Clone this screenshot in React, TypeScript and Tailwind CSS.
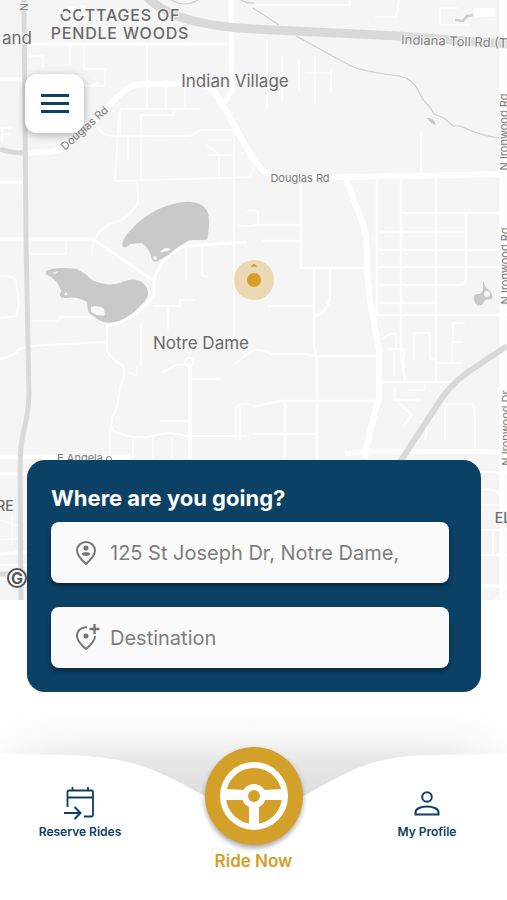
import { useState } from "react";

// Main roads, widest first
const mainRoads = [
  { d: "M27 153 L47 152 C70 151 84 131 100 115 C118 97 126 84 144 84 L200 84 Q211 86 218 97 L248 150 Q260 173 276 178 L350 177 L507 174", w: 6 },
  { d: "M231 0 L232 90 L224 104", w: 5 },
  { d: "M503 0 V600", w: 7 },
  { d: "M345 177 L363 224 Q368 238 367 270 L370 300 L379 350 V399 Q369 430 365 459", w: 6 },
  { d: "M0 457 H130 M345 454 L367 451 L507 452", w: 5 },
  { d: "M0 474 H30 M481 586 H507 M0 554 L27 552", w: 3 },
  { d: "M26 44 H232 M0 79 H24 M0 182 H25", w: 3 },
  { d: "M0 359 Q12 357 20 349 L29 346 L105 342", w: 2 },
  { d: "M107 325 V351 Q111 359 122 365 Q127 372 120 388 L117 408 Q109 420 112 430 Q128 439 149 437 Q168 430 187 436 H247", w: 2 },
  { d: "M0 239 H93 L154 281 Q161 253 187 246 L247 242", w: 3 },
  { d: "M154 281 V295 Q143 310 128 318 Q112 326 107 325", w: 3 },
];

// Blocks and side streets
const streets = [
  "M301 177 V268 H370 M253 225 H301 M262 241 H301 M314 268 V345 L317 362 V459 M330 268 V298 Q326 315 314 316 M268 306 H313",
  "M377 177 V315 H507 M401 177 V355 L405 380 M436 177 V382 M377 250 H507 M377 267 H500 M380 285 H460 Q466 285 466 278 V213 H401 M380 232 H465 M380 303 H436 M466 213 H501",
  "M253 350 Q262 349 271 354 H305 L317 356 H379 M253 407 L280 401 H379 M285 402 V457 M253 434 H317 M379 382 H455",
];

const lanes = [
  "M383 340 Q386 333 396 334 V348 M388 349 H404 V381 M394 351 V375 M414 360 V333 H430 V359 H436 M465 323 H453 V342 H462 M452 342 V363 M438 363 H462",
  "M147 45 V108 M120 109 H200 M120 109 V136 M141 181 V115 H174 V108 M166 80 V108 M185 80 V108 M141 115 V136 Q141 137 190 136 L200 130 H240",
  "M114 181 L219 178 L250 177 L255 162 M234 120 V338 Q240 353 247 356 M208 155 H234 M206 145 L219 154 V178 M232 140 H207",
  "M84 45 V69 H107 M70 45 V65 M25 56 H43 V68 M28 86 H105 V69 M52 86 V76 H86 M90 86 L99 82",
  "M97 126 Q102 136 112 136 H190 M119 112 L115 181 M128 137 V161 M137 181 L138 203 Q128 220 110 224 Q91 234 92 255",
  "M0 318 L16 316 L19 305 L16 280 Q14 276 0 276 M31 321 H58 L60 317 H90 M30 239 V254 H66 V240",
  "M186 247 V280 M202 246 V275 L208 277 M154 306 H180 V300 H195 M168 306 V330 M141 322 V365 M128 372 L137 376 V365 M163 372 L176 365 L190 364",
  "M236 363 L253 350 M236 439 V407 Q245 401 252 406 M160 421 H190 M133 439 V458 M153 438 V458 M172 438 V458 M110 430 V458 M190 379 H220",
  "M253 5 H350 V0 M375 17 H396 L399 0 M440 8 H458 M440 8 V25 H470",
  "M267 40 V110 M282 55 V100 M299 60 V90 M315 55 V105 M331 70 V93 M305 73 H332 M421 132 V174",
  "M395 387 V400 H420 M408 390 H425 V384 M399 403 L412 415 L404 425 M440 404 H472 Q475 405 475 420 V452 M445 405 V440 M419 422 Q430 420 425 440",
  "M481 472 H507 M481 490 Q498 487 500 498 M481 505 H507 M481 530 H507 M481 555 H507 M493 530 V555 M495 600 L507 588",
  "M0 520 L22 527 M0 540 L24 538 M12 515 V545 M0 565 H27 M0 580 H27",
  "M0 128 H12 M2 128 V142 M2 134 H10 M247 212 Q253 208 258 212 V225 M238 226 H253 M240 407 V440",
];

const waters = [
  "M123 247 Q121 241 128 233 Q145 213 166 206 Q196 196 206 209 Q211 216 208 235 Q208 241 202 240 L190 240 Q178 246 170 254 L158 261 Q152 264 151 256 Q148 247 142 243 L130 244 Q125 249 123 247 Z",
  "M46 271 Q56 266 77 269 Q85 273 92 280 Q107 287 120 283 Q134 276 143 283 Q153 293 143 303 Q132 316 119 321 Q106 325 99 320 L89 313 Q87 308 87 302 Q77 296 67 298 Q57 299 61 291 Q59 281 46 274 Z",
  "M474 300 Q472 293 480 294 L483 290 V281 L486 288 Q494 293 492 299 L485 300 L483 304 Q477 309 474 300 Z",
  "M427 118 Q434 117 436 125 Q431 124 427 118 Z",
];

function CityMap() {
  return (
    <svg
      viewBox="0 0 507 600"
      preserveAspectRatio="xMidYMin slice"
      className="h-full w-full bg-[#f5f5f5] font-[Inter,Roboto,sans-serif]"
      role="img"
      aria-label="Map of Notre Dame"
    >
      <g fill="none" stroke="#fff" strokeLinejoin="round">
        {lanes.map((d) => (
          <path key={d} d={d} strokeWidth="1.5" opacity="0.8" />
        ))}
        {streets.map((d) => (
          <path key={d} d={d} strokeWidth="2.5" opacity="0.9" />
        ))}
        {mainRoads.map((r) => (
          <path key={r.d} d={r.d} strokeWidth={r.w} />
        ))}
        <path d="M190 366 V459" strokeWidth="4" />
        <circle cx="189" cy="362" r="4" strokeWidth="2" />
      </g>

      {/* Water */}
      <g fill="#c9c9c9">
        {waters.map((d) => (
          <path key={d} d={d} />
        ))}
      </g>
      <g fill="#f7f7f7">
        <path d="M91 307 Q98 304 104 309 L105 315 Q98 317 91 312 Z" />
        <path d="M160 252 Q165 246 171 249 Q166 253 160 252 Z" />
        <path d="M52 273 L59 271 L55 274 Z" />
        <circle cx="66" cy="294" r="1.500" />
        <circle cx="155" cy="258" r="2" />
        <circle cx="487" cy="294" r="3" />
      </g>
      <g fill="none" stroke="#cecece" strokeWidth="1.2">
        <path d="M253 8 L279 25 M296 36 L349 65 Q360 71 399 76 Q413 79 418 90 Q422 100 430 107 L434 114 L444 118 L453 126 L460 126 Q482 136 499 138" />
        <path d="M171 0 Q184 8 198 0 M241 0 Q247 4 254 3" />
        <path d="M455 20 L463 21 L467 16 L473 15" strokeWidth="2.500" />
      </g>

      {/* Highways */}
      <g fill="none" stroke="#d9d9d9">
        <path d="M146 -4 Q161 12 190 20 Q215 27 253 29 L398 36 L507 44" strokeWidth="9" />
        <path d="M24 0 L26 240 L29 395 Q28 415 24 430 Q20 445 20 470 L21 600" strokeWidth="5" />
        <path d="M0 149 Q10 153 25 153" strokeWidth="5" />
        <path d="M507 346 L468 372 Q448 386 434 410 L400 462" strokeWidth="6" />
        <path d="M0 574 H27" strokeWidth="5" />
      </g>

      {/* Labels */}
      <g fill="#6b6b6b" stroke="#f5f5f5" strokeWidth="2" paintOrder="stroke" textAnchor="middle">
        <g className="text-base font-medium tracking-wider">
          <text x="120" y="21">COTTAGES OF</text>
          <text x="120" y="39">PENDLE WOODS</text>
        </g>
        <g className="text-[17px]">
          <text x="17" y="44">and</text>
          <text x="235" y="87">Indian Village</text>
          <text x="201" y="349">Notre Dame</text>
        </g>
        <g className="text-sm font-medium">
          <text x="5" y="511">RE</text>
          <text x="503" y="523">EL</text>
        </g>
        <g className="text-[11px]" fill="#808080">
          <text x="300" y="182">Douglas Rd</text>
          <text transform="translate(87 131) rotate(-42)">Douglas Rd</text>
          <text transform="translate(28 7) rotate(-90)">N</text>
          <text transform="translate(508 132) rotate(-90)">N Ironwood Rd</text>
          <text transform="translate(509 266) rotate(-90)">N Ironwood Rd</text>
          <text transform="translate(510 428) rotate(-90)">N Ironwood Dr</text>
          <text x="80" y="462">E Angela</text>
          <circle cx="109" cy="459" r="2.500" fill="none" stroke="#808080" strokeWidth="1" />
        </g>
        <text transform="translate(401 44) rotate(2)" textAnchor="start" fill="#808080" className="text-[13px]">
          Indiana Toll Rd (Toll)
        </text>
      </g>

      {/* Status bar glyphs, white on the pale map */}
      <path d="M61 14 V9 M68 8 H76 M83 5 V16" stroke="#fff" strokeWidth="4" opacity="0.9" fill="none" />
      <rect x="474" y="8" width="21" height="9" rx="3" fill="#fff" />

      {/* Map provider badge */}
      <circle cx="17" cy="578" r="9" fill="#fff" stroke="#555" strokeWidth="2" />
      <text x="17" y="584" textAnchor="middle" fill="#555" className="text-base font-bold">
        G
      </text>

      {/* Current position */}
      <circle cx="254" cy="280" r="20" fill="#d3a029" opacity="0.33" />
      <circle cx="254" cy="280" r="7" fill="#d59d2a" />
      <path d="M251 267 Q254 261 257 267 Q254 266 251 267 Z" fill="#d59d2a" />
    </svg>
  );
}

function PersonPin() {
  return (
    <svg viewBox="0 0 24 24" className="h-6 w-6 shrink-0" fill="none" stroke="#757575" strokeWidth="2">
      <path d="M12 23 C6 17.500 3 13.500 3 9.500 A9 8.500 0 0 1 21 9.500 C21 13.500 18 17.500 12 23 Z" strokeLinejoin="round" />
      <circle cx="12" cy="7" r="2.500" fill="#757575" stroke="none" />
      <path d="M7.500 13 C7.500 10.500 16.500 10.500 16.500 13 C15 15.500 9 15.500 7.500 13 Z" fill="#757575" stroke="none" />
    </svg>
  );
}

function AddPin() {
  return (
    <svg viewBox="0 0 24 24" className="h-6 w-6 shrink-0 overflow-visible" fill="none" stroke="#757575" strokeWidth="2">
      <path d="M13 1.200 C7 .8 3 5 3 10 C3 14 6 18 12 23 C18 18 21 14 21 10" strokeLinejoin="round" />
      <circle cx="12" cy="10" r="2.500" fill="#757575" stroke="none" />
      <path d="M20.500 -2 V8 M15.500 3 H25.500" strokeWidth="2.300" />
    </svg>
  );
}

function CalendarArrow() {
  return (
    <svg viewBox="0 0 32 32" className="h-8 w-8 overflow-visible" fill="none" stroke="currentColor" strokeWidth="1.8">
      <path d="M3.500 20 V5 Q3.500 3.500 5 3.500 H27.500 Q29 3.500 29 5 V28 Q29 29.500 27.500 29.500 H20 M3.500 10.500 H29 M8.500 0 V4 M24 0 V4" />
      <path d="M0 26 H16 M10.500 20 L16.500 26 L10.500 32" strokeWidth="2" />
    </svg>
  );
}

function Profile() {
  return (
    <svg viewBox="0 0 26 26" className="h-[26px] w-[26px]" fill="none" stroke="currentColor" strokeWidth="2">
      <circle cx="13" cy="6" r="4.800" />
      <path d="M1.500 23.500 V21.500 C1.500 13.500 24.500 13.500 24.500 21.500 V23.500 Z" />
    </svg>
  );
}

function SteeringWheel() {
  return (
    <svg viewBox="0 0 68 68" className="h-[68px] w-[68px]">
      <circle cx="34" cy="34" r="31" fill="none" stroke="#fff" strokeWidth="6" />
      <path d="M4 27 L26 28 L42 28 L64 27 V38 L42 38 L39 41 V64 H29 V41 L26 38 L4 38 Z" fill="#fff" />
      <circle cx="34" cy="34" r="12" fill="#fff" />
      <circle cx="34" cy="34" r="6" fill="#d3a029" />
    </svg>
  );
}

function BottomNav() {
  return (
    <nav className="relative h-52">
      {/* Curved bar with its shadow */}
      <svg viewBox="0 0 507 208" preserveAspectRatio="none" className="absolute inset-0 h-full w-full">
        <defs>
          <linearGradient id="shade" x1="0" y1="0" x2="0" y2="1">
            <stop offset="0" stopColor="#fff" />
            <stop offset="0.25" stopColor="#f8f8f8" />
            <stop offset="0.5" stopColor="#e6e6e6" />
            <stop offset="1" stopColor="#d9d9d9" />
          </linearGradient>
          <linearGradient id="edges">
            <stop offset="0" stopColor="#fff" stopOpacity="0.8" />
            <stop offset="0.12" stopColor="#fff" stopOpacity="0.1" />
            <stop offset="0.25" stopColor="#fff" stopOpacity="0" />
            <stop offset="0.75" stopColor="#fff" stopOpacity="0" />
            <stop offset="0.88" stopColor="#fff" stopOpacity="0.1" />
            <stop offset="1" stopColor="#fff" stopOpacity="0.8" />
          </linearGradient>
        </defs>
        <rect y="16" width="507" height="110" fill="url(#shade)" />
        <rect y="16" width="507" height="110" fill="url(#edges)" />
        <path d="M0 62 L70 63 C135 66 155 77 203 103 Q254 132 305 103 C353 77 373 63 438 63 L507 62 V208 H0 Z" fill="#fff" />
      </svg>

      <div className="relative flex justify-between px-9 text-[#0b4165]">
        <button className="flex w-22 flex-col items-center pt-[95px]">
          <CalendarArrow />
          <span className="mt-[5px] text-xs font-semibold whitespace-nowrap">Reserve Rides</span>
        </button>
        <button className="flex flex-col items-center pt-[55px] text-[#d3a029]">
          <span className="flex h-[98px] w-[98px] items-center justify-center rounded-full bg-[#d3a029] shadow-[0_3px_5px_rgba(0,0,0,0.35)]">
            <SteeringWheel />
          </span>
          <span className="mt-1 text-[17px] leading-6 font-semibold">Ride Now</span>
        </button>
        <button className="flex w-22 flex-col items-center pt-[99px]">
          <Profile />
          <span className="mt-[7px] text-xs font-semibold whitespace-nowrap">My Profile</span>
        </button>
      </div>
    </nav>
  );
}

export default function App() {
  const [pickup, setPickup] = useState("125 St Joseph Dr, Notre Dame,");
  const [destination, setDestination] = useState("");

  return (
    <main className="relative flex min-h-screen flex-col overflow-hidden bg-white font-[Inter,sans-serif]">
      <div className="absolute inset-x-0 top-0 h-2/3">
        <CityMap />
      </div>

      <header className="relative px-[25px] pt-[74px]">
        <button
          aria-label="Open menu"
          className="flex h-[59px] w-[59px] flex-col items-center justify-center gap-[5px] rounded-xl bg-white shadow-[0_2px_8px_rgba(0,0,0,0.3)]"
        >
          <span className="h-[3px] w-7 bg-[#0b4165]" />
          <span className="h-[3px] w-7 bg-[#0b4165]" />
          <span className="h-[3px] w-7 bg-[#0b4165]" />
        </button>
      </header>

      {/* Trip form */}
      <form className="relative mr-[26px] ml-[27px] mt-auto rounded-[18px] bg-[#0b4165] py-6 pr-8 pl-6">
        <h1 className="mb-2.5 text-[22px] leading-7 font-bold text-white">Where are you going?</h1>
        <div className="flex flex-col gap-6">
          <label className="flex h-[61px] items-center gap-3 rounded-lg bg-[#fafafa] px-[23px] shadow-[0_3px_4px_rgba(0,0,0,0.4)]">
            <PersonPin />
            <input
              aria-label="Pickup"
              value={pickup}
              onChange={(e) => setPickup(e.target.value)}
              className="min-w-0 flex-1 bg-transparent text-xl text-[#7d7d7d] outline-none"
            />
          </label>
          <label className="flex h-[61px] items-center gap-3 rounded-lg bg-[#fafafa] px-[23px] shadow-[0_3px_4px_rgba(0,0,0,0.4)]">
            <AddPin />
            <input
              aria-label="Destination"
              placeholder="Destination"
              value={destination}
              onChange={(e) => setDestination(e.target.value)}
              className="min-w-0 flex-1 bg-transparent text-xl text-[#7d7d7d] outline-none placeholder:text-[#7d7d7d]"
            />
          </label>
        </div>
      </form>

      <BottomNav />
    </main>
  );
}
